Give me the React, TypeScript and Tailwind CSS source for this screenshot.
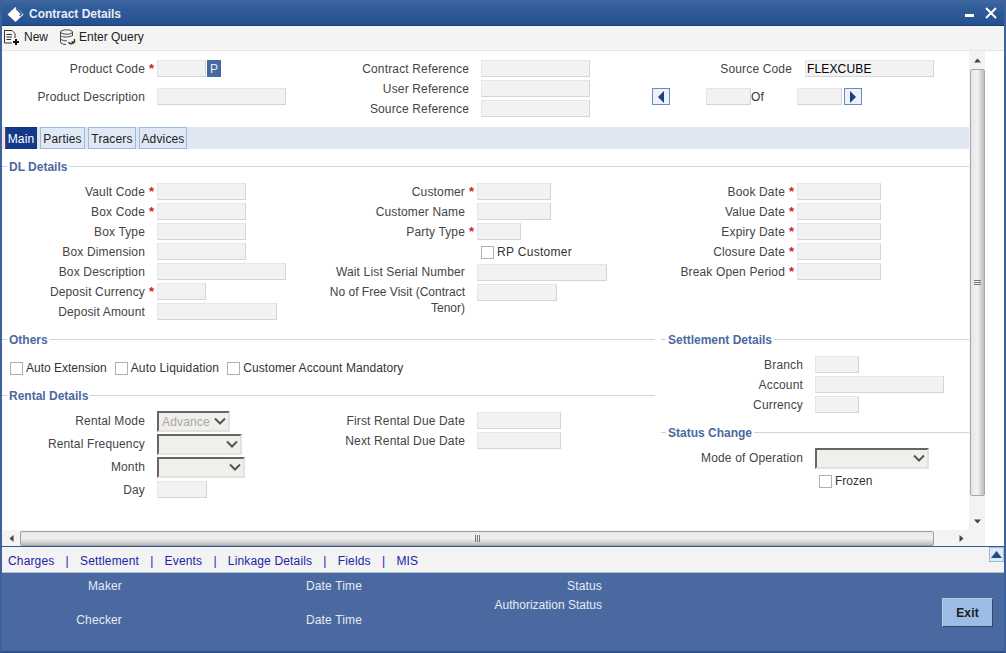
import { ReactNode } from "react";

type FieldProps = {
  label?: ReactNode;
  labelClass: string;
  inputClass: string;
  required?: boolean;
  value?: string;
};

const inputStyle =
  "h-[17px] shrink-0 bg-[#f2f2f2] border border-[#e6e6e6] border-r-[#d4d4d4] border-b-[#d4d4d4] text-xs text-black outline-none";

const Field = ({ label, labelClass, inputClass, required, value }: FieldProps) => (
  <div className="flex h-5 items-start">
    <span className={`${labelClass} shrink-0 text-right leading-[19px]`}>{label}</span>
    <span className="w-3 shrink-0 pl-[4px] text-[13px] font-bold leading-[17px] text-[#c81e1e]">
      {required ? "*" : ""}
    </span>
    <input readOnly value={value ?? ""} className={`${inputStyle} ${inputClass}`} />
  </div>
);

const Legend = ({ title }: { title: string }) => (
  <div className="flex h-[14px] items-center gap-[2px]">
    <div className="h-px w-[5px] bg-[#c9d5e0]" />
    <span className="pt-[2px] text-xs font-bold leading-[14px] tracking-normal text-[#4a6a9f]">{title}</span>
    <div className="h-px flex-1 bg-[#c9d5e0]" />
  </div>
);

const Check = ({ label, className, labelClass }: { label: string; className?: string; labelClass?: string }) => (
  <div className={`flex items-center gap-[3px] ${className ?? ""}`}>
    <div className="h-[13px] w-[13px] border border-[#b0b0b0] bg-white" />
    <span className={`leading-[14px] text-[#333] ${labelClass ?? "tracking-normal"}`}>{label}</span>
  </div>
);

const Select = ({ className, value }: { className: string; value?: string }) => (
  <div
    className={`flex h-[21px] shrink-0 items-center justify-between border-2 border-t-[#666] border-l-[#666] border-r-[#e2e2e2] border-b-[#e2e2e2] bg-[#f0efea] pl-[3px] pr-[1px] ${className}`}
  >
    <span className="text-[#a8a8a8]">{value}</span>
    <svg width="14" height="9" viewBox="0 0 14 9" fill="none">
      <path d="M2 1.5 L7 6.5 L12 1.5" stroke="#555" strokeWidth="2" />
    </svg>
  </div>
);

const SelectField = ({
  label,
  labelClass,
  selectClass,
  rowClass,
  value,
}: {
  label: string;
  labelClass: string;
  selectClass: string;
  rowClass: string;
  value?: string;
}) => (
  <div className={`flex items-start ${rowClass}`}>
    <span className={`${labelClass} shrink-0 text-right leading-[21px]`}>{label}</span>
    <span className="w-3 shrink-0" />
    <Select className={selectClass} value={value} />
  </div>
);

const NavButton = ({ dir }: { dir: "prev" | "next" }) => (
  <button className="flex h-[17px] w-[18px] shrink-0 items-center justify-center border border-[#6d8cb5] bg-[#eef2f8]">
    <svg width="8" height="12" viewBox="0 0 8 12">
      <path d={dir === "prev" ? "M7 0 V12 L1 6 Z" : "M1 0 V12 L7 6 Z"} fill="#15408c" />
    </svg>
  </button>
);

const Tab = ({ label, active, className }: { label: string; active?: boolean; className: string }) => (
  <div
    className={`flex h-[22px] items-center justify-center border pt-px ${className} ${
      active ? "border-[#12357c] border-l-[#8a3a4a] bg-[#12398a] text-white" : "border-[#9db9dc] bg-[#dfe8f5] text-[#222]"
    }`}
  >
    {label}
  </div>
);

const NewIcon = () => (
  <svg width="18" height="17" viewBox="0 0 18 17" fill="none" stroke="#333" strokeWidth="1">
    <path d="M1.5 14 V1.5 H9 L12 4.5 V9" />
    <path d="M1.5 14 H9" />
    <path d="M3.5 5.5 H9 M3.5 8 H9 M3.5 10.5 H8" />
    <path d="M13 10 V16 M10 13 H16" stroke="#111" strokeWidth="2" />
  </svg>
);

const QueryIcon = () => (
  <svg width="17" height="17" viewBox="0 0 17 17" fill="none" stroke="#444" strokeWidth="1">
    <ellipse cx="7.5" cy="3" rx="6" ry="2.2" />
    <path d="M1.5 3 V13 C1.5 14.5 4 15.5 7 15.5 M13.5 3 V7" />
    <path d="M1.5 6.5 C3 8.5 10 8.5 13.5 6.5 M1.5 10 C3 11.5 6 12 8 11.8" />
    <path d="M9.5 13 C10.5 15.5 14 15.5 15.5 12.5 M15.5 10 V13 H12.5" stroke="#333" strokeWidth="1.4" />
  </svg>
);

const ScrollArrow = ({ d }: { d: string }) => (
  <svg width="7" height="7" viewBox="0 0 7 7">
    <path d={d} fill="#444" />
  </svg>
);

export default function App() {
  return (
    <div
      className="flex h-[653px] w-[1006px] flex-col overflow-hidden border-x-2 border-t-[3px] border-b-2 border-t-[#3f659f] border-x-[#3d619b] border-b-[#2f5189] bg-white text-xs tracking-[0.15px] text-[#444]"
      style={{ fontFamily: '"Liberation Sans", Arial, sans-serif' }}
    >
      {/* Title bar */}
      <div className="flex h-[23px] shrink-0 items-center border-b border-[#173a73] bg-gradient-to-b from-[#36619f] to-[#23508f] pl-[5px] pr-[7px]">
        <svg width="17" height="15" viewBox="0 0 17 15">
          <path d="M8.5 0 L16.5 7.5 L8.5 15 L0.5 7.5 Z" fill="#fff" />
          <path d="M9 1.5 L14.5 7 L12.5 9" stroke="#1f4a8c" strokeWidth="1.2" fill="none" />
        </svg>
        <span className="ml-[5px] font-bold tracking-normal text-[#e8edf5]">Contract Details</span>
        <div className="ml-auto mt-[3px] h-[3px] w-[9px] bg-white" />
        <svg className="mb-[2px] ml-[11px]" width="12" height="12" viewBox="0 0 12 12">
          <path d="M1 1 L11 11 M11 1 L1 11" stroke="#fff" strokeWidth="2" />
        </svg>
      </div>

      {/* Toolbar */}
      <div className="flex h-[25px] shrink-0 items-center border-b border-[#e6e6e6] bg-[#f4f4f4] pb-[2px] pl-[1px] tracking-normal text-[#222]">
        <NewIcon />
        <span className="ml-[3px]">New</span>
        <span className="ml-[11px]">
          <QueryIcon />
        </span>
        <span className="ml-[3px]">Enter Query</span>
      </div>

      {/* Scrolling form area */}
      <div className="flex h-[479px] shrink-0">
        <div className="w-[967px] shrink-0">
          {/* Header fields */}
          <div className="flex h-[76px] pt-[9px]">
            <div className="w-[320px] shrink-0">
              <div className="flex h-7 items-start">
                <span className="w-[143px] text-right leading-[19px]">Product Code</span>
                <span className="w-3 pl-[4px] text-[13px] font-bold leading-[17px] text-[#c81e1e]">*</span>
                <input readOnly value="" className={`${inputStyle} w-[49px]`} />
                <div className="ml-px flex h-[17px] w-[14px] items-center justify-center bg-[#46699f] text-xs text-[#e8edf5]">
                  P
                </div>
              </div>
              <Field label="Product Description" labelClass="w-[143px]" inputClass="w-[129px]" />
            </div>
            <div className="w-[318px] shrink-0">
              <Field label="Contract Reference" labelClass="w-[147px]" inputClass="w-[109px]" />
              <Field label="User Reference" labelClass="w-[147px]" inputClass="w-[109px]" />
              <Field label="Source Reference" labelClass="w-[147px]" inputClass="w-[109px]" />
            </div>
            <div className="flex-1">
              <div className="flex h-7 items-start">
                <span className="w-[152px] text-right leading-[19px]">Source Code</span>
                <input
                  readOnly
                  value="FLEXCUBE"
                  className={`${inputStyle} ml-[13px] w-[129px] pl-px`}
                />
              </div>
              <div className="flex items-start pl-[12px]">
                <NavButton dir="prev" />
                <input readOnly value="" className={`${inputStyle} ml-[36px] w-[45px]`} />
                <span className="w-[46px] leading-[19px] text-[#333]">Of</span>
                <input readOnly value="" className={`${inputStyle} w-[45px]`} />
                <span className="ml-[2px]">
                  <NavButton dir="next" />
                </span>
              </div>
            </div>
          </div>

          {/* Tabs */}
          <div className="flex h-[22px] gap-[3px] bg-[#e0e7f3] pl-[3px]">
            <Tab label="Main" active className="w-[32px]" />
            <Tab label="Parties" className="w-[45px]" />
            <Tab label="Tracers" className="w-[48px]" />
            <Tab label="Advices" className="w-[48px]" />
          </div>

          {/* DL Details */}
          <div className="mt-[10px]">
            <Legend title="DL Details" />
          </div>
          <div className="mt-[10px] flex h-[140px]">
            <div className="w-[320px] shrink-0">
              <Field label="Vault Code" labelClass="w-[143px]" inputClass="w-[89px]" required />
              <Field label="Box Code" labelClass="w-[143px]" inputClass="w-[89px]" required />
              <Field label="Box Type" labelClass="w-[143px]" inputClass="w-[89px]" />
              <Field label="Box Dimension" labelClass="w-[143px]" inputClass="w-[89px]" />
              <Field label="Box Description" labelClass="w-[143px]" inputClass="w-[129px]" />
              <Field label="Deposit Currency" labelClass="w-[143px]" inputClass="w-[49px]" required />
              <Field label="Deposit Amount" labelClass="w-[143px]" inputClass="w-[120px]" />
            </div>
            <div className="w-[318px] shrink-0">
              <Field label="Customer" labelClass="w-[143px]" inputClass="w-[74px]" required />
              <Field label="Customer Name" labelClass="w-[143px]" inputClass="w-[74px]" />
              <Field label="Party Type" labelClass="w-[143px]" inputClass="w-[44px]" required />
              <div className="h-5 pl-[159px] pt-[2px]">
                <Check label="RP Customer" labelClass="tracking-[0.3px]" />
              </div>
              <div className="pt-px">
                <Field label="Wait List Serial Number" labelClass="-mt-px w-[143px]" inputClass="w-[130px]" />
                <div className="flex items-start">
                  <span className="w-[143px] shrink-0 text-right leading-[16px] tracking-normal">
                    No of Free Visit (Contract Tenor)
                  </span>
                  <input readOnly value="" className={`${inputStyle} ml-[12px] w-[80px]`} />
                </div>
              </div>
            </div>
            <div className="flex-1">
              <Field label="Book Date" labelClass="w-[145px]" inputClass="w-[84px]" required />
              <Field label="Value Date" labelClass="w-[145px]" inputClass="w-[84px]" required />
              <Field label="Expiry Date" labelClass="w-[145px]" inputClass="w-[84px]" required />
              <Field label="Closure Date" labelClass="w-[145px]" inputClass="w-[84px]" required />
              <Field label="Break Open Period" labelClass="w-[145px]" inputClass="w-[84px]" required />
            </div>
          </div>

          {/* Others, rental, settlement, status */}
          <div className="mt-[9px] flex">
            <div className="w-[653px] shrink-0">
              <Legend title="Others" />
              <div className="mt-[15px] flex h-[14px] pl-[8px]">
                <Check label="Auto Extension" />
                <Check label="Auto Liquidation" className="ml-[8px]" labelClass="tracking-[0.15px]" />
                <Check label="Customer Account Mandatory" className="ml-[8px]" labelClass="tracking-[0.08px]" />
              </div>
              <div className="mt-[13px]">
                <Legend title="Rental Details" />
              </div>
              <div className="mt-[9px] flex">
                <div className="w-[320px] shrink-0">
                  <SelectField label="Rental Mode" labelClass="w-[143px]" selectClass="w-[73px]" rowClass="h-[23px]" value="Advance" />
                  <SelectField label="Rental Frequency" labelClass="w-[143px]" selectClass="w-[85px]" rowClass="h-[23px]" />
                  <SelectField label="Month" labelClass="w-[143px]" selectClass="w-[88px]" rowClass="h-6" />
                  <Field label="Day" labelClass="w-[143px]" inputClass="w-[50px]" />
                </div>
                <div className="pt-px">
                  <Field label="First Rental Due Date" labelClass="w-[143px]" inputClass="w-[84px]" />
                  <Field label="Next Rental Due Date" labelClass="w-[143px]" inputClass="w-[84px]" />
                </div>
              </div>
            </div>
            <div className="ml-[6px] flex-1">
              <Legend title="Settlement Details" />
              <div className="mt-[10px]">
                <Field label="Branch" labelClass="w-[142px]" inputClass="w-[44px]" />
                <Field label="Account" labelClass="w-[142px]" inputClass="w-[129px]" />
                <Field label="Currency" labelClass="w-[142px]" inputClass="w-[44px]" />
              </div>
              <div className="mt-[9px]">
                <Legend title="Status Change" />
              </div>
              <div className="mt-[9px]">
                <SelectField label="Mode of Operation" labelClass="w-[142px]" selectClass="w-[114px]" rowClass="h-[26px]" />
              </div>
              <div className="pl-[158px]">
                <Check label="Frozen" />
              </div>
            </div>
          </div>
        </div>

        {/* Vertical scrollbar */}
        <div className="flex w-[16px] shrink-0 flex-col items-center bg-[#f3f3f3]">
          <div className="flex h-[18px] items-center justify-center">
            <ScrollArrow d="M3.5 1.5 L7 5.5 H0 Z" />
          </div>
          <div className="flex h-[427px] w-[15px] flex-col items-center justify-center gap-px rounded-[2px] border border-[#a8a8a8] bg-gradient-to-r from-[#e4e4e4] via-[#f2f2f2] to-[#bdbdbd]">
            <div className="h-px w-[7px] bg-[#777]" />
            <div className="h-px w-[7px] bg-[#777]" />
            <div className="h-px w-[7px] bg-[#777]" />
          </div>
          <div className="flex flex-1 items-end justify-center pb-[5px]">
            <ScrollArrow d="M0 1.5 H7 L3.5 5.5 Z" />
          </div>
        </div>
      </div>

      {/* Horizontal scrollbar */}
      <div className="flex h-[16px] shrink-0">
        <div className="flex w-[983px] items-center bg-[#f3f3f3]">
          <div className="flex w-[18px] justify-center">
            <ScrollArrow d="M1.5 3.5 L5.5 0 V7 Z" />
          </div>
          <div className="flex h-[15px] w-[914px] items-center justify-center gap-px rounded-[2px] border border-[#a0a0a0] bg-gradient-to-b from-[#e8e8e8] via-[#f0f0f0] to-[#bdbdbd]">
            <div className="h-[7px] w-px bg-[#777]" />
            <div className="h-[7px] w-px bg-[#777]" />
            <div className="h-[7px] w-px bg-[#777]" />
          </div>
          <div className="ml-[22px] flex w-[10px] justify-center">
            <ScrollArrow d="M1.5 0 L5.5 3.5 L1.5 7 Z" />
          </div>
        </div>
      </div>

      {/* Sub-screen links */}
      <div className="flex h-[27px] shrink-0 border-t border-[#345a94] border-b border-b-[#a9bfdc] bg-[#f3f3f3] pl-[6px] text-[#2222a8]">
        <div className="flex items-center gap-[11.2px] pt-[2px]">
          <span>Charges</span>
          <span>|</span>
          <span>Settlement</span>
          <span>|</span>
          <span>Events</span>
          <span>|</span>
          <span>Linkage Details</span>
          <span>|</span>
          <span>Fields</span>
          <span>|</span>
          <span>MIS</span>
        </div>
        <div className="ml-auto flex h-[15px] w-[15px] items-center justify-center border border-[#9db9dc] bg-[#dfe8f5]">
          <svg width="11" height="7" viewBox="0 0 11 7">
            <path d="M5.5 0 L11 7 H0 Z" fill="#1f4a8c" />
          </svg>
        </div>
      </div>

      {/* Audit footer */}
      <div className="flex flex-1 bg-[#4a69a0] pt-[6px] text-[#e6ebf4]">
        <div className="w-[120px] shrink-0 text-right leading-[14px]">
          <div>Maker</div>
          <div className="mt-[20px]">Checker</div>
        </div>
        <div className="w-[240px] shrink-0 text-right leading-[14px]">
          <div>Date Time</div>
          <div className="mt-[20px]">Date Time</div>
        </div>
        <div className="w-[240px] shrink-0 text-right leading-[14px]">
          <div>Status</div>
          <div className="mt-[5px] tracking-normal">Authorization Status</div>
        </div>
        <button className="ml-auto mr-[11px] mt-[19px] h-[29px] w-[51px] border border-[#b9cde8] border-r-[#30466e] border-b-[#30466e] bg-[#9dbce3] font-bold text-[#1a1a1a]">
          Exit
        </button>
      </div>
    </div>
  );
}
